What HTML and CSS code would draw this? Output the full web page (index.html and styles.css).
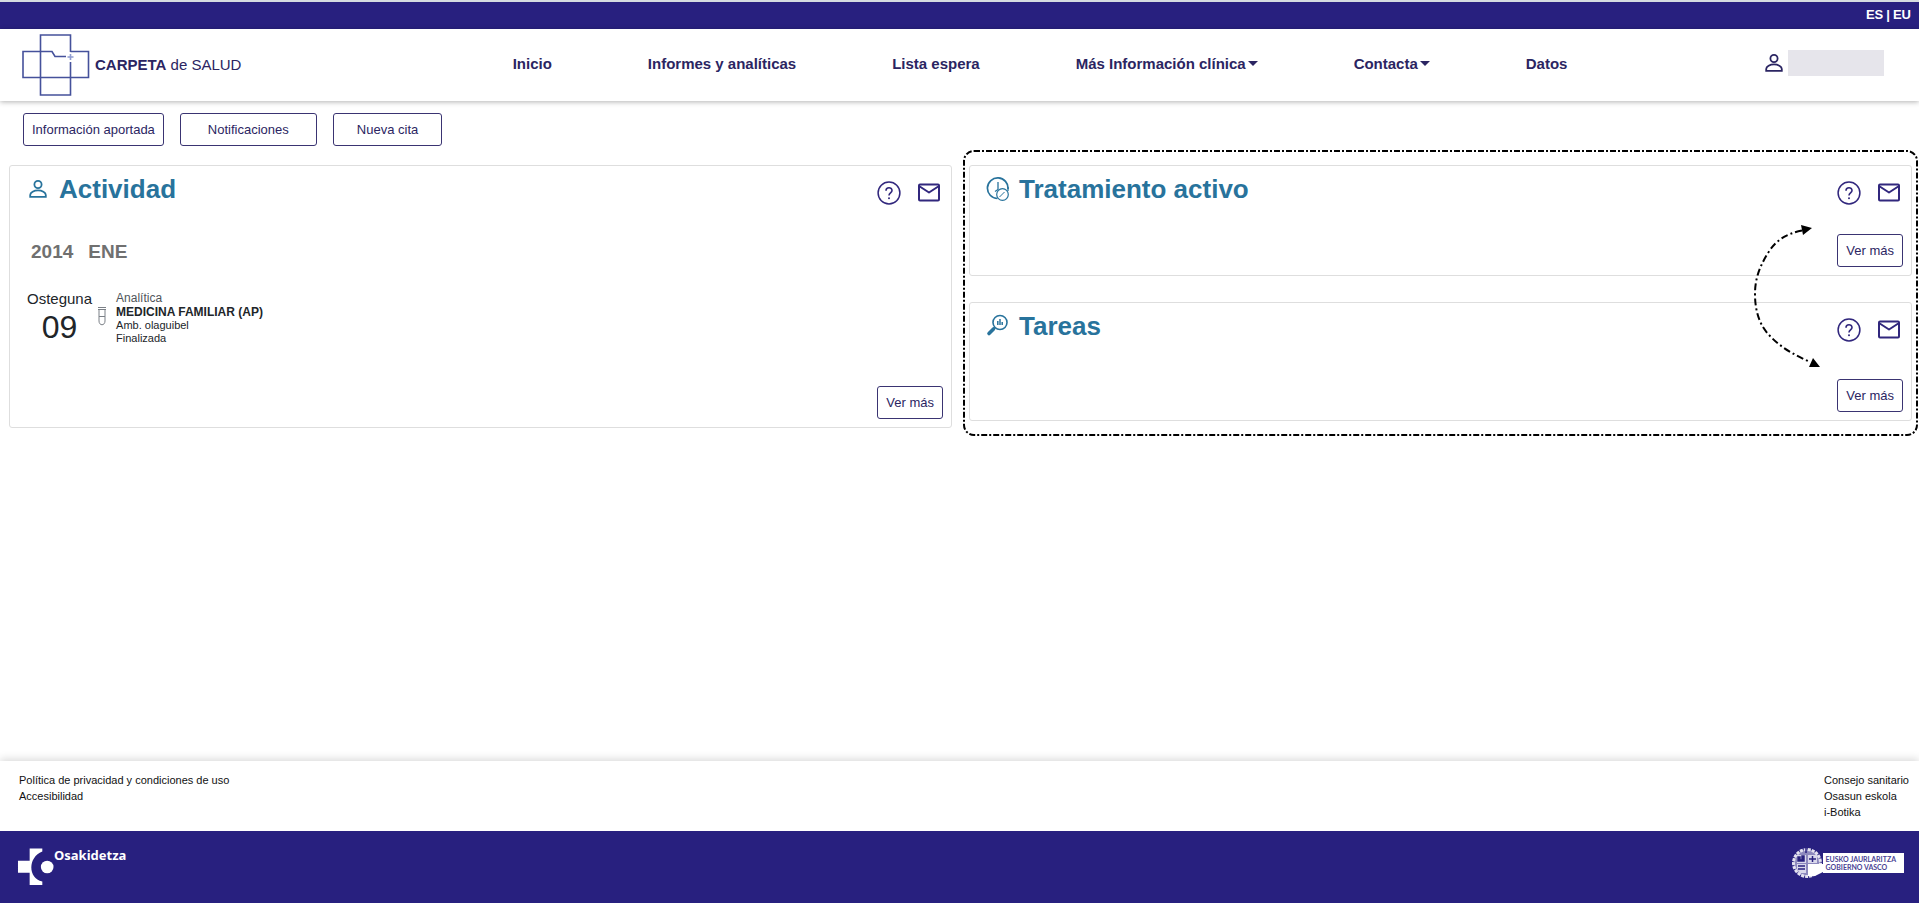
FILE: index.html
```
<!DOCTYPE html>
<html lang="es">
<head>
<meta charset="utf-8">
<title>Carpeta de Salud</title>
<meta name="viewport" content="width=device-width, initial-scale=1">
<link rel="stylesheet" href="styles.css">
</head>
<body>
<svg class="sprite" aria-hidden="true">
  <symbol id="person" viewBox="0 0 24 24">
    <g fill="none" stroke="currentColor" stroke-width="1.800"><circle cx="12" cy="7.500" r="3.600"/><path d="M4.200 19.800V18C4.200 15.500 8 13.400 12 13.400S19.800 15.500 19.800 18V19.800Z"/></g>
  </symbol>
  <symbol id="help" viewBox="0 0 24 24">
    <g fill="none" stroke="currentColor"><circle cx="12" cy="12" r="10.900" stroke-width="1.500"/><path d="M9 9.700C9 5.800 15 5.800 15 9.600C15 12 12 12 12 14.600" stroke-width="1.600"/></g>
    <circle cx="12" cy="17.300" r="1" fill="currentColor"/>
  </symbol>
  <symbol id="mail" viewBox="0 0 24 24">
    <g fill="none" stroke="currentColor" stroke-width="2" stroke-linejoin="round"><rect x="2" y="3.500" width="20" height="16" rx="1"/><path d="M2 5L12 11.500L22 5"/></g>
  </symbol>
</svg>

<div class="langbar">
  <a href="#es" lang="es">ES</a><span>|</span><a href="#eu" lang="eu">EU</a>
</div>

<header class="header">
  <a class="brand" href="#inicio">
    <svg class="brand-logo" viewBox="0 0 68 62" fill="none" stroke="#45519b" stroke-width="1.600" aria-hidden="true">
      <path d="M48.500 18V1H18.500V61H48.500V28M48.500 17.500H66.500V43.500H1V17.500H30L33 22.500H44"/>
      <path d="M48.500 20V26M45.500 23H51.500" stroke="#8e9bd0"/>
    </svg>
    <span><strong>CARPETA</strong> de SALUD</span>
  </a>
  <nav class="nav">
    <a href="#inicio">Inicio</a>
    <a href="#informes">Informes y analíticas</a>
    <a href="#lista">Lista espera</a>
    <a class="has-menu" href="#mas">Más Información clínica</a>
    <a class="has-menu" href="#contacta">Contacta</a>
    <a href="#datos">Datos</a>
  </nav>
  <div class="user">
    <svg class="icon" role="img" aria-label="Usuario"><use href="#person"/></svg>
    <span class="user-name"></span>
  </div>
</header>

<main class="main">
  <div class="toolbar">
    <button class="btn" type="button">Información aportada</button>
    <button class="btn btn-wide" type="button">Notificaciones</button>
    <button class="btn btn-mid" type="button">Nueva cita</button>
  </div>

  <div class="board">
    <section class="card">
      <div class="card-head">
        <svg class="icon title-icon"><use href="#person"/></svg>
        <h2>Actividad</h2>
        <div class="actions">
          <button type="button" aria-label="Ayuda"><svg class="icon"><use href="#help"/></svg></button>
          <button type="button" aria-label="Mensaje"><svg class="icon"><use href="#mail"/></svg></button>
        </div>
      </div>
      <h3 class="month"><span>2014</span><span>ENE</span></h3>
      <div class="event">
        <div class="date"><span>Osteguna</span><span class="day">09</span></div>
        <svg class="tube" viewBox="0 0 10 20" fill="none" stroke="#7b8087" aria-hidden="true"><path d="M1 1.500H9M1 3.500H9M2 3.500V15C2 20 8 20 8 15V3.500M2 10.500H8"/></svg>
        <div class="detail">
          <span class="kind">Analítica</span>
          <strong>MEDICINA FAMILIAR (AP)</strong>
          <span>Amb. olaguibel</span>
          <span>Finalizada</span>
        </div>
      </div>
      <div class="card-foot"><button class="btn" type="button">Ver más</button></div>
    </section>

    <div class="side">
      <section class="card">
        <div class="card-head">
          <svg class="icon title-icon" viewBox="0 0 24 24" fill="none" stroke="currentColor"><path d="M22 12A10.300 10.300 0 1 0 11.500 21.500" stroke-width="1.700"/><path d="M12 5V12.500L9 14.500M22 14V10" stroke-width="1.300"/><circle cx="16.500" cy="17.500" r="5.800" stroke-width="1.200"/><path d="M13.500 20L18.500 15" stroke-width="1"/></svg>
          <h2>Tratamiento activo</h2>
          <div class="actions">
            <button type="button" aria-label="Ayuda"><svg class="icon"><use href="#help"/></svg></button>
            <button type="button" aria-label="Mensaje"><svg class="icon"><use href="#mail"/></svg></button>
          </div>
        </div>
        <div class="card-foot"><button class="btn" type="button">Ver más</button></div>
      </section>
      <section class="card card-tall">
        <div class="card-head">
          <svg class="icon title-icon" viewBox="0 0 24 24" fill="none" stroke="currentColor"><circle cx="14" cy="8.500" r="7" stroke-width="1.600"/><path d="M9 13.500L7 15.500" stroke-width="2"/><path d="M7.500 15L3 19.500" stroke-width="3.600" stroke-linecap="round"/><path d="M11.800 11V7M14 11V5M16.200 11V8" stroke-width="1.500"/></svg>
          <h2>Tareas</h2>
          <div class="actions">
            <button type="button" aria-label="Ayuda"><svg class="icon"><use href="#help"/></svg></button>
            <button type="button" aria-label="Mensaje"><svg class="icon"><use href="#mail"/></svg></button>
          </div>
        </div>
        <div class="card-foot"><button class="btn" type="button">Ver más</button></div>
      </section>
      <svg class="frame" aria-hidden="true"><rect class="frame-line" x="1" y="1" rx="10"/></svg>
      <svg class="swap" viewBox="0 0 72 150" aria-hidden="true">
        <path d="M52 10.500C36 14 26 20 18 33C10 46 5 58 5 74C5 92 10 106 20 116C31 128 45 135 60 142" fill="none" stroke="#000" stroke-width="2" stroke-dasharray="7 3 2 3"/>
        <path d="M62 8L51 5L53 15ZM70 147L59 147L63 138Z"/>
      </svg>
    </div>
  </div>
</main>

<footer>
  <div class="links">
    <ul>
      <li><a href="#privacidad">Política de privacidad y condiciones de uso</a></li>
      <li><a href="#accesibilidad">Accesibilidad</a></li>
    </ul>
    <ul>
      <li><a href="#consejo">Consejo sanitario</a></li>
      <li><a href="#eskola">Osasun eskola</a></li>
      <li><a href="#botika">i-Botika</a></li>
    </ul>
  </div>
  <div class="logos">
    <div class="osakidetza">
      <svg viewBox="0 0 38 40" fill="#fff" aria-hidden="true"><path d="M13 1H26V4C11 10 11 31 26 35V38.500H13V26H1V13.500H13Z"/><circle cx="31" cy="20" r="6.500"/></svg>
      <span>Osakidetza</span>
    </div>
    <div class="gobierno">
      <svg viewBox="0 0 32 32" aria-hidden="true">
        <circle cx="16" cy="16" r="13.500" fill="#8d89bd" stroke="#e4e3f0" stroke-width="3" stroke-dasharray="3 1"/>
        <path d="M6 8H15V16H6ZM17 8H26V16H17ZM6 17H15V26H9L6 22Z" fill="#d9d8eb"/>
        <path d="M17 17H32V25L24 29H17Z" fill="#fff"/>
        <path d="M7 14V10H9V13H11V9H13V14ZM18 12H25M21.500 9V15M7 19H14M7 22H14M15 1V6" fill="#28207f" stroke="#28207f" stroke-width="1.500"/>
      </svg>
      <p>EUSKO JAURLARITZA<br>GOBIERNO VASCO</p>
    </div>
  </div>
</footer>
</body>
</html>
```
FILE: styles.css
```
:root {
  --navy: #28207f;
  --ink: #2b2562;
  --teal: #28739c;
}

* { box-sizing: border-box; }

body {
  margin: 0;
  min-height: 100vh;
  display: flex;
  flex-direction: column;
  border-top: 2px solid #d5dbe0;
  background: #fff;
  color: #212529;
  font-family: "Liberation Sans", Arial, sans-serif;
}

a { color: inherit; text-decoration: none; }
h2, h3, p, ul { margin: 0; padding: 0; }
ul { list-style: none; }
button { font-family: inherit; cursor: pointer; }

.sprite { display: none; }
.icon { display: block; flex: none; width: 24px; height: 24px; }

.langbar {
  display: flex;
  justify-content: flex-end;
  gap: 3px;
  padding: 4px 8px 5px;
  background: var(--navy);
  color: #fff;
  font-size: 13px;
  font-weight: bold;
  line-height: 18px;
}

.header {
  display: flex;
  align-items: center;
  padding: 5px 35px 5px 22px;
  box-shadow: 0 1px 5px rgba(0, 0, 0, .3);
  color: var(--ink);
  font-size: 15px;
}

.brand {
  flex: 0 0 26.300%;
  display: flex;
  align-items: center;
  gap: 5px;
}
.brand-logo { width: 68px; height: 62px; }
.brand span { padding-bottom: 2px; }

.nav {
  display: flex;
  gap: 5vw;
  padding: 0 0 4px 1px;
  font-weight: bold;
  white-space: nowrap;
}
.has-menu::after {
  content: "";
  display: inline-block;
  margin-left: 2px;
  vertical-align: 3px;
  border: 5px solid transparent;
  border-top-color: currentColor;
  border-bottom: 0;
}

.user {
  display: flex;
  align-items: center;
  gap: 2px;
  margin-left: auto;
  padding-bottom: 4px;
}
.user-name { width: 96px; height: 26px; background: #e6e5eb; }

.main { flex: 1; }

.toolbar {
  display: flex;
  gap: 16px;
  padding: 12px 23px 19px;
}

.btn {
  height: 33px;
  padding: 0 8px;
  border: 1px solid #3a3472;
  border-radius: 3px;
  background: #fff;
  color: var(--ink);
  font-size: 13px;
}
.btn-wide { padding: 0 27px; }
.btn-mid { padding: 0 23px; }

.board {
  display: grid;
  grid-template-columns: 1fr 1fr;
  align-items: start;
  gap: 17px;
  padding: 0 7px 24px 9px;
}

.card {
  padding: 7px 8px 8px 16px;
  border: 1px solid #dedede;
  border-radius: 3px;
}

.card-head {
  display: flex;
  gap: 9px;
  color: var(--teal);
}
.card-head h2 { font-size: 26px; line-height: 32px; }
.title-icon { margin-top: 4px; }

.actions {
  display: flex;
  gap: 16px;
  margin: 8px 2px 0 auto;
}
.actions button {
  padding: 0;
  border: 0;
  background: none;
  color: #31277d;
}

.card-foot {
  display: flex;
  justify-content: flex-end;
  margin-top: 29px;
}
.card-tall .card-foot { margin-top: 37px; }
.event + .card-foot { margin-top: 41px; }

.month {
  display: flex;
  gap: 15px;
  margin: 35px 0 25px 5px;
  color: #707070;
  font-size: 19px;
  line-height: 24px;
}

.event { display: flex; padding-left: 1px; }
.date {
  display: flex;
  flex-direction: column;
  align-items: center;
  font-size: 15px;
  line-height: 20px;
}
.day { font-size: 32px; line-height: 36px; }
.tube { width: 10px; height: 20px; margin: 17px 9px 0 5px; }
.detail {
  display: flex;
  flex-direction: column;
  padding-top: 2px;
  font-size: 11px;
  line-height: 13px;
}
.detail .kind,
.detail strong { font-size: 12px; line-height: 14px; }
.detail .kind { color: #50555a; }

.side {
  position: relative;
  display: grid;
  gap: 26px;
}
.frame {
  position: absolute;
  top: -15px;
  left: -6px;
  width: calc(100% + 12px);
  height: calc(100% + 30px);
  pointer-events: none;
}
.frame-line {
  width: calc(100% - 2px);
  height: calc(100% - 2px);
  fill: none;
  stroke: #000;
  stroke-width: 2px;
  stroke-dasharray: 6 2 2 2;
}
.swap {
  position: absolute;
  top: 55px;
  right: 90px;
  width: 72px;
  height: 150px;
  pointer-events: none;
}

.links {
  display: flex;
  justify-content: space-between;
  padding: 11px 10px 11px 19px;
  box-shadow: 0 -2px 8px rgba(0, 0, 0, .15);
  color: #111;
  font-size: 11px;
  line-height: 16px;
}

.logos {
  display: flex;
  justify-content: space-between;
  align-items: flex-start;
  padding: 16px 15px 16px 17px;
  background: var(--navy);
  color: #fff;
}
.osakidetza {
  display: flex;
  font-family: "Noto Sans", sans-serif;
  font-size: 13px;
  font-weight: bold;
  line-height: 16px;
}
.osakidetza svg { width: 37px; height: 40px; }

.gobierno { display: flex; align-items: center; }
.gobierno svg { width: 32px; height: 32px; }
.gobierno p {
  padding: 2px 8px 2px 3px;
  background: #fff;
  color: #4a4395;
  font-family: Lato, sans-serif;
  font-size: 7px;
  font-weight: bold;
  line-height: 8px;
}
```
